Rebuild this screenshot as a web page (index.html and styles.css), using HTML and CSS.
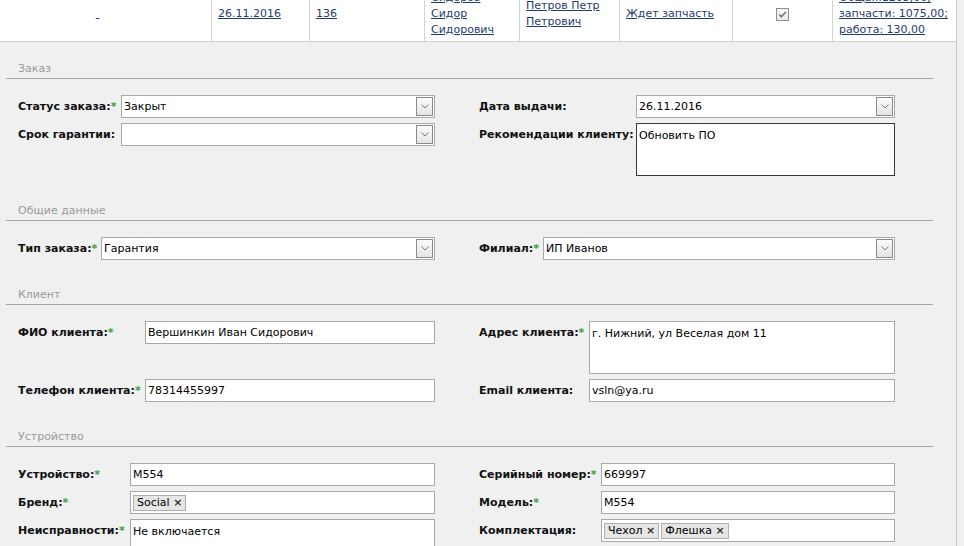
FILE: index.html
```html
<!DOCTYPE html>
<html lang="ru">
<head>
<meta charset="utf-8">
<title>Заказ</title>
<link rel="stylesheet" href="styles.css">
</head>
<body>
<div class="page">
  <div class="orders" role="table">
    <div class="orow" role="row">
      <div class="ocell ocell-blank"><a href="#">&nbsp;</a></div>
      <div class="ocell"><a href="#">26.11.2016</a></div>
      <div class="ocell"><a href="#">136</a></div>
      <div class="ocell"><a href="#">Сидоров<br>Сидор<br>Сидорович</a></div>
      <div class="ocell"><a href="#">Петров Петр<br>Петрович</a></div>
      <div class="ocell"><a href="#">Ждет запчасть</a></div>
      <div class="ocell ocell-check"><span class="check"><svg width="11" height="11" viewBox="0 0 11 11"><path d="M2.2 5.6 L4.4 7.8 L8.8 3" fill="none" stroke="#6b6b6b" stroke-width="1.4"/></svg></span></div>
      <div class="ocell ocell-last"><a href="#">Общая:1205,00;<br>запчасти: 1075,00;<br>работа: 130,00</a></div>
    </div>
  </div>

  <form class="form">
    <section class="sec">
      <h3 class="sec-title">Заказ</h3>
      <div class="sec-body g-order">
        <label class="lbl">Статус заказа:<span class="req">*</span></label>
        <div class="select"><span class="sel-val">Закрыт</span><span class="sel-btn"><svg width="8" height="5" viewBox="0 0 8 5"><path d="M0.5 0.5 L4 4 L7.5 0.5" fill="none" stroke="#7a7a7a" stroke-width="1"/></svg></span></div>
        <label class="lbl lbl-r">Дата выдачи:</label>
        <div class="select"><span class="sel-val">26.11.2016</span><span class="sel-btn"><svg width="8" height="5" viewBox="0 0 8 5"><path d="M0.5 0.5 L4 4 L7.5 0.5" fill="none" stroke="#7a7a7a" stroke-width="1"/></svg></span></div>
        <label class="lbl">Срок гарантии:</label>
        <div class="select"><span class="sel-val"></span><span class="sel-btn"><svg width="8" height="5" viewBox="0 0 8 5"><path d="M0.5 0.5 L4 4 L7.5 0.5" fill="none" stroke="#7a7a7a" stroke-width="1"/></svg></span></div>
        <label class="lbl lbl-r">Рекомендации клиенту:</label>
        <textarea class="area area-dark">Обновить ПО</textarea>
      </div>
    </section>

    <section class="sec">
      <h3 class="sec-title">Общие данные</h3>
      <div class="sec-body g-common">
        <label class="lbl">Тип заказа:<span class="req">*</span></label>
        <div class="select"><span class="sel-val">Гарантия</span><span class="sel-btn"><svg width="8" height="5" viewBox="0 0 8 5"><path d="M0.5 0.5 L4 4 L7.5 0.5" fill="none" stroke="#7a7a7a" stroke-width="1"/></svg></span></div>
        <label class="lbl lbl-r">Филиал:<span class="req">*</span></label>
        <div class="select"><span class="sel-val">ИП Иванов</span><span class="sel-btn"><svg width="8" height="5" viewBox="0 0 8 5"><path d="M0.5 0.5 L4 4 L7.5 0.5" fill="none" stroke="#7a7a7a" stroke-width="1"/></svg></span></div>
      </div>
    </section>

    <section class="sec">
      <h3 class="sec-title">Клиент</h3>
      <div class="sec-body g-client">
        <label class="lbl">ФИО клиента:<span class="req">*</span></label>
        <input class="inp" type="text" value="Вершинкин Иван Сидорович">
        <label class="lbl lbl-r">Адрес клиента:<span class="req">*</span></label>
        <textarea class="area">г. Нижний, ул Веселая дом 11</textarea>
        <label class="lbl">Телефон клиента:<span class="req">*</span></label>
        <input class="inp" type="text" value="78314455997">
        <label class="lbl lbl-r">Email клиента:</label>
        <input class="inp" type="text" value="vsln@ya.ru">
      </div>
    </section>

    <section class="sec">
      <h3 class="sec-title">Устройство</h3>
      <div class="sec-body g-device">
        <label class="lbl">Устройство:<span class="req">*</span></label>
        <input class="inp" type="text" value="M554">
        <label class="lbl lbl-r">Серийный номер:<span class="req">*</span></label>
        <input class="inp" type="text" value="669997">
        <label class="lbl">Бренд:<span class="req">*</span></label>
        <div class="tags"><span class="tag">Social <b class="x">×</b></span></div>
        <label class="lbl lbl-r">Модель:<span class="req">*</span></label>
        <input class="inp" type="text" value="M554">
        <label class="lbl">Неисправности:<span class="req">*</span></label>
        <textarea class="area">Не включается</textarea>
        <label class="lbl lbl-r">Комплектация:</label>
        <div class="tags"><span class="tag">Чехол <b class="x">×</b></span><span class="tag">Флешка <b class="x">×</b></span></div>
      </div>
    </section>
  </form>
</div>
</body>
</html>
```

FILE: styles.css
```css
html, body {
  margin: 0;
  padding: 0;
  background: #f0f0f0;
}
body {
  font-family: "DejaVu Sans", Verdana, sans-serif;
  font-size: 11px;
  line-height: 16px;
  color: #000;
  overflow: hidden;
}
.page {
  width: 956px;
  border-right: 1px solid #c8c8c8;
  min-height: 700px;
}

/* top orders row */
.orders {
  margin-top: -13px;
  background: #fff;
  border-bottom: 1px solid #cfcfcf;
}
.orow {
  display: grid;
  grid-template-columns: 212px 98px 115px 95px 100px 113px 100px 123px;
}
.ocell {
  display: flex;
  align-items: center;
  padding: 3px 6px;
  border-right: 1px solid #d2d2d2;
  min-height: 48px;
}
.ocell-last { border-right: 0; }
.ocell-blank { justify-content: center; padding-right: 22px; }
.ocell-check { justify-content: center; }
.ocell a {
  color: #1f3c6e;
  text-decoration: underline;
}
.check {
  width: 11px;
  height: 11px;
  border: 1px solid #8e8e8e;
  background: linear-gradient(#f7f7f7, #e9e9e9);
  display: flex;
}

/* form */
.form {
  padding: 19px 23px 0 6px;
}
.sec-title {
  margin: 0;
  padding: 0 0 1px 12px;
  font-size: 11px;
  font-weight: normal;
  line-height: 16px;
  color: #9a9a9a;
  border-bottom: 1px solid #a6a6a6;
}
.sec-body {
  display: grid;
  row-gap: 5px;
  align-items: start;
  padding: 16px 0 27px 12px;
}
.g-order { grid-template-columns: 103px 314px 201px 259px; }
.g-common { grid-template-columns: 83px 334px 108px 352px; }
.g-client { grid-template-columns: 127px 290px 154px 306px; }
.g-device { grid-template-columns: 112px 305px 166px 294px; }

.lbl {
  font-weight: bold;
  line-height: 23px;
  white-space: nowrap;
  color: #111;
}
.lbl-r { padding-left: 44px; }
.req {
  color: #3a9a3a;
  font-weight: bold;
}

.select, .inp, .tags {
  box-sizing: border-box;
  height: 23px;
  border: 1px solid #a9a9a9;
  background: #fff;
}
.select {
  display: flex;
  align-items: center;
  padding: 0 1px 0 2px;
}
.sel-val { flex: 1; }
.sel-btn {
  box-sizing: border-box;
  width: 17px;
  height: 19px;
  border: 1px solid #8a8a8a;
  background: linear-gradient(#fbfbfb, #e4e4e4);
  display: flex;
  align-items: center;
  justify-content: center;
}
.inp {
  width: 100%;
  padding: 0 2px;
  margin: 0;
  font-family: inherit;
  font-size: 11px;
  color: #000;
  outline: none;
}
.area {
  box-sizing: border-box;
  width: 100%;
  height: 53px;
  margin: 0;
  padding: 4px 2px 2px;
  border: 1px solid #a9a9a9;
  background: #fff;
  font-family: inherit;
  font-size: 11px;
  line-height: 16px;
  color: #000;
  resize: none;
  display: block;
  outline: none;
}
.area-dark { border-color: #3a3a3a; }

.tags {
  display: flex;
  align-items: center;
  gap: 2px;
  padding: 0 2px;
}
.tag {
  border: 1px solid #b0b0b0;
  background: #e6e6e6;
  padding: 0 3px;
  line-height: 14px;
  white-space: nowrap;
}
.x {
  font-weight: bold;
  color: #333;
}
```
